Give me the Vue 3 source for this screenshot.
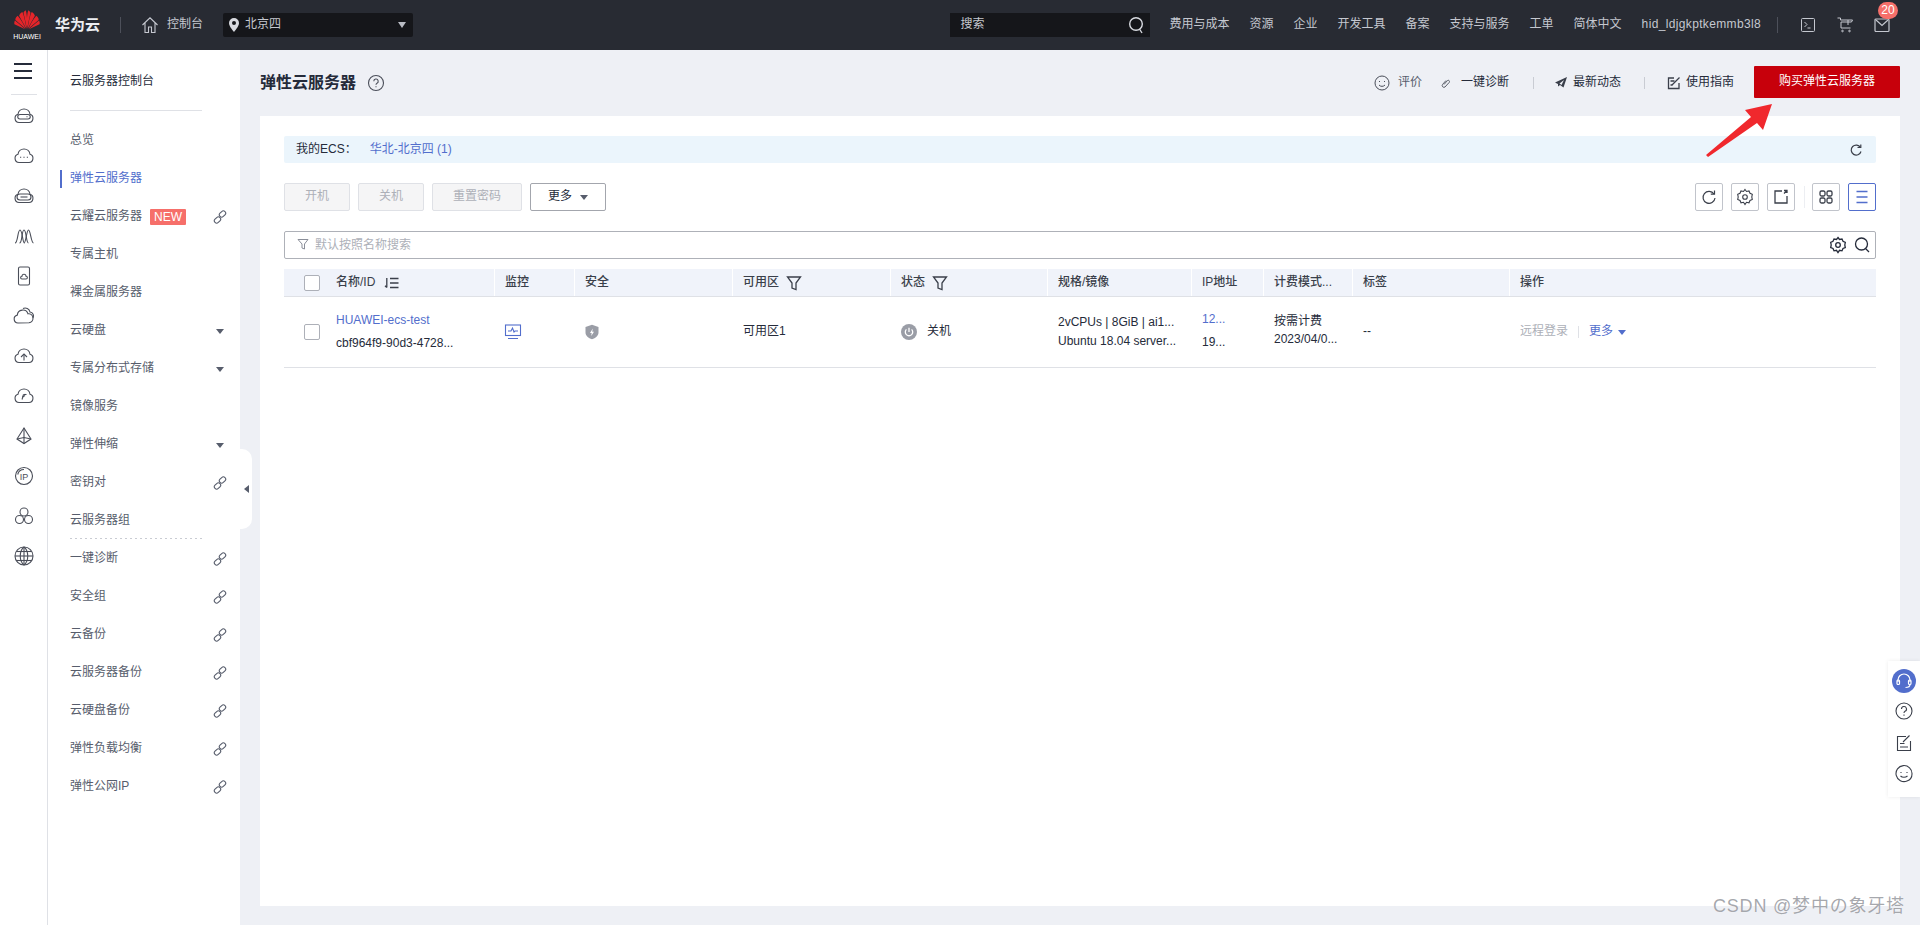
<script setup>
const cloud = 'M7 18.500a4.200 4.200 0 0 1-1-8.200A6 6 0 0 1 12 5a6 6 0 0 1 6 5.300 4.200 4.200 0 0 1-1 8.200Z'
const railIcons = [
  { paths: [cloud, 'M8 10.500h8a1.500 1.500 0 0 1 0 4.500H8a1.500 1.500 0 0 1 0-4.500Z', 'M14.500 12.700h1'] },
  { paths: [cloud, 'M8 13.200h1.200', 'M11.400 13.200h1.200', 'M14.800 13.200h1.200'] },
  { paths: [cloud, 'M8 10h8a2.500 2.500 0 0 1 0 6H8a2.500 2.500 0 0 1 0-6Z', 'M8.500 13h7'] },
  { paths: ['M3 19c3 0 2.500-13 5-13s2.500 13 4.500 13', 'M7.500 19c3 0 2-13 4.500-13s2 13 4.500 13', 'M12 19c2 0 2.500-13 4.500-13S19 19 21.500 19'] },
  { paths: ['M8 3h8a1.500 1.500 0 0 1 1.500 1.500v15A1.500 1.500 0 0 1 16 21H8a1.500 1.500 0 0 1-1.500-1.500v-15A1.500 1.500 0 0 1 8 3Z', 'M10 15a1.400 1.400 0 0 1 0-2.800 2 2 0 0 1 4 0 1.400 1.400 0 0 1 0 2.800Z'] },
  { paths: ['M6 19a4 4 0 0 1-.7-7.900A5.500 5.500 0 0 1 16 9.800a4.200 4.200 0 0 1 1 8.900Z', 'M11 4.500a5 5 0 0 1 7 3.500 4 4 0 0 1 3 6'] },
  { paths: [cloud, 'M12 16.500v-6', 'M9 13l3-3 3 3'] },
  { paths: [cloud, 'M10 15.500l1.500-5', 'M11.500 10.500h3', 'M10.500 13l2.500-1.500'] },
  { paths: ['M12 4 5 15l7 4.500 7-4.500Z', 'M12 4v15.500', 'M5 15l7-1.500 7 1.500'] },
  { paths: ['M12 3.500a8.500 8.500 0 1 1 0 17 8.500 8.500 0 0 1 0-17Z', 'M12 5.500a6.500 6.500 0 0 0-6.300 5'], label: 'IP' },
  { paths: ['M12 4a4 4 0 1 1 0 8 4 4 0 0 1 0-8Z', 'M7.500 11.500a4 4 0 1 1 0 8 4 4 0 0 1 0-8Z', 'M16.500 11.500a4 4 0 1 1 0 8 4 4 0 0 1 0-8Z'] },
  { paths: ['M12 3a9 9 0 1 1 0 18 9 9 0 0 1 0-18Z', 'M3 12h18', 'M4.500 7.500h15', 'M4.500 16.500h15', 'M12 3v18', 'M12 3c-5 4-5 14 0 18', 'M12 3c5 4 5 14 0 18'] },
]
const navItems = [
  { name: '总览' },
  { name: '弹性云服务器', active: true },
  { name: '云耀云服务器', badge: 'NEW', link: true },
  { name: '专属主机' },
  { name: '裸金属服务器' },
  { name: '云硬盘', arrow: true },
  { name: '专属分布式存储', arrow: true },
  { name: '镜像服务' },
  { name: '弹性伸缩', arrow: true },
  { name: '密钥对', link: true },
  { name: '云服务器组', dotted: true },
  { name: '一键诊断', link: true },
  { name: '安全组', link: true },
  { name: '云备份', link: true },
  { name: '云服务器备份', link: true },
  { name: '云硬盘备份', link: true },
  { name: '弹性负载均衡', link: true },
  { name: '弹性公网IP', link: true },
]
const topLinks = ['费用与成本', '资源', '企业', '开发工具', '备案', '支持与服务', '工单', '简体中文', 'hid_ldjgkptkemmb3l8']
const columns = [
  { label: '名称/ID', sort: true, first: true },
  { label: '监控' },
  { label: '安全' },
  { label: '可用区', filter: true },
  { label: '状态', filter: true },
  { label: '规格/镜像' },
  { label: 'IP地址' },
  { label: '计费模式...' },
  { label: '标签' },
  { label: '操作' },
]
</script>

<template>
  <div class="page">
    <header class="topbar">
      <div class="logo">
        <svg width="26" height="20" viewBox="0 0 28 21" class="petals">
          <g fill="#e5252a">
            <path d="M14 20 10.500 4C9.500 2 11.500 .8 12.500 0c1.500 3 2 12 1.500 20Z" />
            <path d="M14 20 17.500 4C18.500 2 16.500 .8 15.500 0c-1.500 3-2 12-1.500 20Z" />
            <path d="M13.300 20 5.500 6C6 4 8 2.500 9 2c2 4 3.500 12 4.300 18Z" />
            <path d="M14.700 20 22.500 6C22 4 20 2.500 19 2c-2 4-3.500 12-4.300 18Z" />
            <path d="M12.500 20 1.500 10.500C1 9 3 6.500 4 6c3.500 4 6.500 9.500 8.500 14Z" />
            <path d="M15.500 20 26.500 10.500C27 9 25 6.500 24 6c-3.500 4-6.500 9.500-8.500 14Z" />
            <path d="M12 20.500 .5 15C0 13.500 .5 12 1 11c4 3 8 6.500 11 9.500Z" />
            <path d="M16 20.500 27.500 15C28 13.500 27.500 12 27 11c-4 3-8 6.500-11 9.500Z" />
          </g>
        </svg>
        <span class="logo-text">HUAWEI</span>
      </div>
      <span class="brand">华为云</span>
      <span class="top-sep"></span>
      <svg class="home" width="18" height="18" viewBox="0 0 18 18" fill="none" stroke="#c5c8d0" stroke-width="1.100">
        <path d="M1.500 9 9 1.800 16.500 9M4 7v9.500h3.500V11h3v5.500H14V7" />
      </svg>
      <span class="console">控制台</span>
      <div class="region">
        <svg width="10" height="14" viewBox="0 0 10 14"><path fill="#d8dae0" fill-rule="evenodd" d="M5 0a5 5 0 0 1 5 5c0 3-3 6.500-5 9-2-2.500-5-6-5-9a5 5 0 0 1 5-5Zm0 3a2 2 0 1 0 0 4 2 2 0 0 0 0-4Z" /></svg>
        <span class="region-name">北京四</span>
        <span class="tri light"></span>
      </div>
      <div class="spacer"></div>
      <div class="search">
        <span>搜索</span>
        <svg width="16" height="18" viewBox="0 0 16 18" fill="none" stroke="#d8dae0" stroke-width="1.400"><circle cx="8" cy="8" r="6.300" /><path d="m11.500 13 2.500 4" /></svg>
      </div>
      <nav class="top-links">
        <span v-for="t in topLinks" :key="t">{{ t }}</span>
      </nav>
      <span class="top-sep right"></span>
      <div class="top-icons">
        <svg width="16" height="16" viewBox="0 0 16 16" fill="none" stroke="#c5c8d0"><rect x="1.500" y="1.500" width="13" height="13" rx="1" /><path d="m4.500 5 2.500 2.500-2.500 2.500M7.500 11h3" /></svg>
        <svg width="18" height="18" viewBox="0 0 18 18" fill="none" stroke="#c5c8d0"><path d="M1.500 2h3v2h12l-1 2H5v6h9.500" /><path d="M12 4v5" /><circle cx="6.500" cy="15" r=".8" /><circle cx="13.500" cy="15" r=".8" /></svg>
        <div class="mail">
          <svg width="16" height="16" viewBox="0 0 16 16" fill="none" stroke="#c5c8d0" stroke-width="1.200"><rect x="1" y="2" width="14" height="12.500" rx="1" /><path d="m2 3 6 5.500L14 3" /></svg>
          <span class="mail-badge">20</span>
        </div>
      </div>
    </header>

    <div class="body">
      <aside class="rail">
        <div class="burger"><i></i><i></i><i></i></div>
        <div class="rail-line"></div>
        <svg v-for="(ic, i) in railIcons" :key="i" class="rail-icon" width="24" height="24" viewBox="0 0 24 24" fill="none" stroke="#4a4e59" stroke-width="1.100">
          <path v-for="d in ic.paths" :key="d" :d="d" />
          <text v-if="ic.label" x="12" y="15.500" text-anchor="middle" class="ip-label">{{ ic.label }}</text>
        </svg>
      </aside>

      <aside class="sidebar">
        <div class="side-title">云服务器控制台</div>
        <div class="side-line"></div>
        <ul class="side-list">
          <li v-for="item in navItems" :key="item.name" class="side-item" :class="{ active: item.active, dotted: item.dotted }">
            <span>{{ item.name }}</span>
            <em v-if="item.badge" class="new">{{ item.badge }}</em>
            <svg v-if="item.link" class="side-end" width="14" height="14" viewBox="0 0 14 14" fill="none" stroke="#575d6c" stroke-width="1.100">
              <rect x="1" y="7.700" width="7" height="4.600" rx="2.300" transform="rotate(-45 4.500 10)" />
              <rect x="6" y="1.700" width="7" height="4.600" rx="2.300" transform="rotate(-45 9.500 4)" />
            </svg>
            <span v-if="item.arrow" class="tri side-end small"></span>
          </li>
        </ul>
        <div class="collapse"><span class="tri-left"></span></div>
      </aside>

      <main class="main">
        <div class="main-head">
          <h1>弹性云服务器</h1>
          <svg class="help" width="18" height="18" viewBox="0 0 18 18" fill="none" stroke="#4a4e59" stroke-width="1.100"><circle cx="9" cy="9" r="7.500" /><path d="M6.800 7.200A2.200 2.200 0 1 1 10 9.200c-.7.400-1 .8-1 1.600" /><path d="M9 12.300v1" /></svg>
          <div class="spacer"></div>
          <div class="actions">
            <svg class="a-smile" width="16" height="16" viewBox="0 0 16 16" fill="none" stroke="#4a4e59"><circle cx="8" cy="8" r="7" /><path d="M5.500 6v1M10.500 6v1M5 10c1.500 1.800 4.500 1.800 6 0" /></svg>
            <span class="a-gray">评价</span>
            <svg class="a-link" width="10" height="12" viewBox="0 0 10 12" fill="none" stroke="#4a4e59" stroke-width=".9"><path d="M4 7.500 7.500 3.500A1.300 1.300 0 0 1 9.300 5.300L5 10A1.800 1.800 0 0 1 2.500 7.500L6 3.500" /></svg>
            <span class="a-text wide">一键诊断</span>
            <span class="a-sep"></span>
            <svg class="a-news" width="14" height="14" viewBox="0 0 14 14" fill="#3a3f4a"><path d="M13 1 1 6.500l3 1.500v2.500l2-1.500 3.500 2.500ZM5.500 7.500 10 4l-2.500 5Z" /></svg>
            <span class="a-text">最新动态</span>
            <span class="a-sep two"></span>
            <svg class="a-news" width="14" height="14" viewBox="0 0 14 14" fill="none" stroke="#3a3f4a" stroke-width="1.300"><path d="M12 7v5.500H1.500V2H7" /><path d="M5 9 12.500 1.500" /><path d="M3.500 5h4M3.500 9h2" /></svg>
            <span class="a-text">使用指南</span>
          </div>
          <button class="buy">购买弹性云服务器</button>
        </div>

        <section class="card">
          <div class="info">
            <span class="info-label">我的ECS：</span>
            <span class="info-link">华北-北京四 (1)</span>
            <div class="spacer"></div>
            <svg width="14" height="14" viewBox="0 0 14 14" fill="none" stroke="#3a3f4a" stroke-width="1.200"><path d="M11.500 4.500A5 5 0 1 0 12 8.500" /><path d="M8.500 4.500h3.300V1.500" /></svg>
          </div>

          <div class="toolbar">
            <button class="btn disabled w1">开机</button>
            <button class="btn disabled w1">关机</button>
            <button class="btn disabled w2">重置密码</button>
            <button class="btn more">更多<span class="tri"></span></button>
            <div class="spacer"></div>
            <button class="tool">
              <svg width="16" height="16" viewBox="0 0 16 16" fill="none" stroke="#3a3f4a" stroke-width="1.200"><path d="M13 5A6 6 0 1 0 14 9" /><path d="M9.800 5.200h3.700V1.500" /></svg>
            </button>
            <button class="tool">
              <svg width="18" height="18" viewBox="0 0 18 18" fill="none" stroke="#3a3f4a" stroke-width="1.100"><path d="m9 1.500 1.500 2 2.500-.5 1 2.300 2.300 1-.5 2.700.5 2.500-2.300 1-1 2.300-2.500-.5L9 16.500l-1.500-2.200-2.500.5-1-2.300-2.300-1 .5-2.500-.5-2.700 2.300-1 1-2.300 2.500.5Z" /><circle cx="9" cy="9" r="2.300" /></svg>
            </button>
            <button class="tool">
              <svg width="16" height="16" viewBox="0 0 16 16" fill="none" stroke="#3a3f4a" stroke-width="1.300"><path d="M9 2H2v12h12V7" /><path d="M11 4.500 14 1.500M11 1.500h3V4" /></svg>
            </button>
            <span class="tool-sep"></span>
            <button class="tool">
              <svg width="16" height="16" viewBox="0 0 16 16" fill="none" stroke="#3a3f4a" stroke-width="1.300"><rect x="2" y="2" width="5" height="5" rx="1.500" /><rect x="9" y="2" width="5" height="5" rx="1.500" /><rect x="2" y="9" width="5" height="5" rx="1.500" /><rect x="9" y="9" width="5" height="5" rx="1.500" /></svg>
            </button>
            <button class="tool on">
              <svg width="16" height="16" viewBox="0 0 16 16" fill="none" stroke="#526ecc" stroke-width="1.300"><path d="M2.500 2.500h11M2.500 8h11M2.500 13.500h11" /></svg>
            </button>
          </div>

          <div class="filter">
            <svg class="f-funnel" width="12" height="12" viewBox="0 0 12 12" fill="none" stroke="#8a8e99"><path d="M1 1.500h10L7.500 6v5L5 10V6Z" /></svg>
            <span class="placeholder">默认按照名称搜索</span>
            <div class="spacer"></div>
            <svg width="18" height="18" viewBox="0 0 18 18" fill="none" stroke="#252b3a" stroke-width="1.300"><path d="m9 1.500 1.500 2 2.500-.5 1 2.300 2.300 1-.5 2.700.5 2.500-2.300 1-1 2.300-2.500-.5L9 16.500l-1.500-2.200-2.500.5-1-2.300-2.300-1 .5-2.500-.5-2.700 2.300-1 1-2.300 2.500.5Z" /><circle cx="9" cy="9" r="2.300" /></svg>
            <svg class="f-search" width="18" height="18" viewBox="0 0 18 18" fill="none" stroke="#252b3a" stroke-width="1.300"><circle cx="8.500" cy="8" r="6" /><path d="m12.500 12.500 3.500 3.500" /></svg>
          </div>

          <div class="table">
            <div class="row head">
              <div v-for="c in columns" :key="c.label" class="hcell" :class="{ first: c.first }">
                <span v-if="c.first" class="check"></span>
                <span>{{ c.label }}</span>
                <svg v-if="c.sort" class="sort" width="16" height="14" viewBox="0 0 16 14" fill="none" stroke="#3a3f4a" stroke-width="1.300"><path d="M2.800 2v9.500M1 9.800l1.800 1.700M6 2.500h8.500M6 7h8.500M6 11.500h8.500" /></svg>
                <svg v-if="c.filter" class="funnel" width="16" height="16" viewBox="0 0 16 16" fill="none" stroke="#3a3f4a" stroke-width="1.300"><path d="M1.500 2h13L10 8v6.500L6 13V8Z" /></svg>
              </div>
            </div>
            <div class="row data">
              <div class="cell first">
                <span class="check"></span>
                <div class="stack gap-name">
                  <span class="link">HUAWEI-ecs-test</span>
                  <span>cbf964f9-90d3-4728...</span>
                </div>
              </div>
              <div class="cell">
                <svg class="nudge" width="18" height="18" viewBox="0 0 18 18" fill="none" stroke="#526ecc" stroke-width="1.100"><rect x="1.500" y="2" width="15" height="10.500" /><path d="M4 8h3l1.500-3 1.500 4 1-1h3M4 15.500h10" /></svg>
              </div>
              <div class="cell">
                <svg class="nudge" width="16" height="16" viewBox="0 0 16 16"><path fill="#9a9da6" fill-rule="evenodd" d="M8 .8 14.500 3v5.500c0 3.300-3 5.600-6.500 6.700-3.500-1.100-6.500-3.400-6.500-6.700V3Zm.8 3.700L6 9h1.700l-.5 3L10 7.800H8.200Z" /></svg>
              </div>
              <div class="cell">可用区1</div>
              <div class="cell">
                <span class="power">
                  <svg width="16" height="16" viewBox="0 0 16 16"><circle cx="8" cy="8" r="8" fill="#9a9da6" /><path d="M5.400 5.400a3.700 3.700 0 1 0 5.200 0M8 3.800V8" fill="none" stroke="#fff" stroke-width="1.300" /></svg>
                </span>
                <span>关机</span>
              </div>
              <div class="cell">
                <div class="stack gap-spec">
                  <span>2vCPUs | 8GiB | ai1...</span>
                  <span>Ubuntu 18.04 server...</span>
                </div>
              </div>
              <div class="cell">
                <div class="stack gap-ip">
                  <span class="link">12...</span>
                  <span>19...</span>
                </div>
              </div>
              <div class="cell">
                <div class="stack gap-bill">
                  <span>按需计费</span>
                  <span>2023/04/0...</span>
                </div>
              </div>
              <div class="cell">--</div>
              <div class="cell">
                <span class="muted">远程登录</span>
                <span class="op-sep"></span>
                <span class="link">更多</span>
                <span class="tri blue"></span>
              </div>
            </div>
          </div>
        </section>
      </main>
    </div>

    <div class="float">
      <span class="float-blue">
        <svg width="18" height="18" viewBox="0 0 18 18" fill="none" stroke="#fff" stroke-width="1.200"><path d="M3 10V8a6 6 0 0 1 12 0v2" /><rect x="2" y="8" width="2.500" height="4.500" rx="1" /><rect x="13.500" y="8" width="2.500" height="4.500" rx="1" /><path d="M15 12.500c0 2-2 3-4.500 3" /></svg>
      </span>
      <svg class="f1" width="18" height="18" viewBox="0 0 18 18" fill="none" stroke="#3a3f4a" stroke-width="1.100"><circle cx="9" cy="9" r="8" /><path d="M6.500 7A2.500 2.500 0 1 1 10 9.300c-.7.400-1 .8-1 1.700" /><path d="M9 12.500v1.200" /></svg>
      <svg class="f2" width="18" height="18" viewBox="0 0 18 18" fill="none" stroke="#3a3f4a" stroke-width="1.100"><path d="M11 2.500H2.500v14h13V7M5 9.500h4.500M5 13h8M8 8l6.500-6.500" /></svg>
      <svg class="f3" width="18" height="18" viewBox="0 0 18 18" fill="none" stroke="#3a3f4a" stroke-width="1.100"><path d="M12 16a8 8 0 1 1 5-7c0 3-2 6-5 7Z" /><path d="M6 7v1M12 7v1M5.500 11c1.800 1.500 5 1.500 7 0" /></svg>
    </div>

    <svg class="arrow" width="70" height="54" viewBox="0 0 70 54"><path fill="#f0282d" d="M1 52 46 14 40 7 67 1 58 27 52 20 3 54Z" transform="translate(0 -1)" /></svg>
    <div class="watermark">CSDN @梦中の象牙塔</div>
  </div>
</template>

<style>
html, body { margin: 0; padding: 0; overflow: hidden; }
</style>

<style scoped>
.page {
  position: relative;
  height: 925px;
  overflow: hidden;
  display: flex;
  flex-direction: column;
  background: #eef0f5;
  color: #252b3a;
  font: 12px/1.3 "Liberation Sans", "Noto Sans CJK SC", sans-serif;
}
.spacer { flex: 1; }
svg { flex: none; display: block; }
button { font: inherit; padding: 0; cursor: pointer; }

.tri {
  display: inline-block;
  width: 0;
  height: 0;
  border-left: 5px solid transparent;
  border-right: 5px solid transparent;
  border-top: 6px solid #575d6c;
}
.tri.light { border-top-color: #b9bcc4; border-left-width: 4px; border-right-width: 4px; }

/* top bar */
.topbar {
  height: 50px;
  flex: none;
  display: flex;
  align-items: center;
  background: #282b33;
  color: #c5c8d0;
}
.logo {
  width: 26px;
  margin-left: 14px;
  display: flex;
  flex-direction: column;
  align-items: center;
}
.petals { margin-top: 1px; }
.logo-text { font-size: 7px; line-height: 8px; color: #fff; margin-top: 3px; }
.brand { margin-left: 15px; font-size: 15px; font-weight: 700; color: #eceef2; }
.top-sep { width: 1px; height: 16px; background: #4d505a; margin-left: 20px; }
.home { margin-left: 20px; }
.console { margin-left: 8px; }
.region {
  margin-left: 20px;
  width: 190px;
  height: 24px;
  box-sizing: border-box;
  padding: 0 7px 0 6px;
  display: flex;
  align-items: center;
  background: #15161a;
  border-radius: 2px;
}
.region-name { margin-left: 6px; flex: 1; font-size: 12px; }
.search {
  width: 200px;
  height: 24px;
  box-sizing: border-box;
  padding: 0 6px 0 10px;
  display: flex;
  align-items: center;
  justify-content: space-between;
  background: #15161a;
}
.top-links { display: flex; gap: 20px; margin-left: 19px; white-space: nowrap; }
.top-links span:last-child { letter-spacing: .35px; }
.top-sep.right { margin-left: 16px; }
.top-icons { display: flex; align-items: center; margin-left: 22px; margin-right: 30px; gap: 20px; }
.mail { position: relative; }
.mail-badge {
  position: absolute;
  left: 4px;
  top: -15px;
  min-width: 20px;
  height: 17px;
  line-height: 17px;
  text-align: center;
  border-radius: 9px;
  background: #f66f6a;
  color: #fff;
  font-size: 12px;
}

/* shell */
.body { flex: 1; display: flex; min-height: 0; }
.rail {
  width: 47px;
  flex: none;
  background: #fff;
  border-right: 1px solid #dfe1e6;
  display: flex;
  flex-direction: column;
  align-items: center;
}
.burger { margin-top: 13px; width: 18px; display: flex; flex-direction: column; gap: 5px; padding-right: 1px; }
.burger i { display: block; height: 2px; background: #252b3a; }
.rail-line { width: 26px; height: 1px; background: #dfe1e6; margin: 15px 0 9px 1px; }
.rail-icon { margin-bottom: 16px; }
.ip-label { font: 9px "Liberation Sans", sans-serif; fill: #4a4e59; stroke: none; }

.sidebar {
  position: relative;
  width: 192px;
  flex: none;
  box-sizing: border-box;
  background: #fff;
}
.side-title { margin: 23px 0 0 22px; line-height: 16px; color: #252b3a; }
.side-line { width: 132px; height: 1px; background: #dfe1e6; margin: 21px 0 11px 22px; }
.side-list { list-style: none; margin: 0; padding: 0; }
.side-item {
  position: relative;
  height: 38px;
  display: flex;
  align-items: center;
  padding: 0 13px 0 22px;
  color: #575d6c;
}
.side-item.active { color: #526ecc; }
.side-item.active::before {
  content: "";
  position: absolute;
  left: 12px;
  top: 10px;
  width: 2px;
  height: 18px;
  background: #526ecc;
}
.side-item.dotted::after {
  content: "";
  position: absolute;
  left: 22px;
  right: 38px;
  bottom: 1px;
  height: 1px;
  background: repeating-linear-gradient(90deg, #c9ccd3 0 2px, transparent 2px 5px);
}
.new {
  margin-left: 8px;
  padding: 0 4px;
  height: 16px;
  line-height: 16px;
  background: #f66f6a;
  color: #fff;
  font-style: normal;
  font-size: 12px;
  border-radius: 1px;
}
.side-end { margin-left: auto; }
.tri.small { border-left-width: 4px; border-right-width: 4px; border-top-width: 5px; margin-right: 3px; }
.collapse {
  position: absolute;
  left: 192px;
  top: 399px;
  width: 12px;
  height: 80px;
  background: #fff;
  border-radius: 0 10px 10px 0;
  display: flex;
  align-items: center;
  justify-content: center;
}
.tri-left {
  width: 0;
  height: 0;
  border-top: 4px solid transparent;
  border-bottom: 4px solid transparent;
  border-right: 5px solid #575d6c;
}

/* main */
.main { flex: 1; min-width: 0; padding: 0 20px; display: flex; flex-direction: column; }
.main-head { height: 66px; display: flex; align-items: center; flex: none; }
.main-head h1 { margin: 0; font-size: 16px; line-height: 32px; font-weight: 700; color: #252b3a; }
.help { margin-left: 11px; }
.actions { display: flex; align-items: center; color: #252b3a; }
.a-gray { margin-left: 8px; color: #575d6c; }
.a-link { margin-left: 18px; }
.a-text { margin-left: 5px; }
.a-text.wide { margin-left: 11px; }
.a-sep { width: 1px; height: 12px; background: #c9ccd3; margin: 0 17px 0 24px; }
.a-sep.two { margin: 0 19px 0 23px; }
.a-news { margin-left: 3px; }
.buy {
  width: 146px;
  height: 32px;
  margin: 0 0 2px 20px;
  border: 0;
  border-radius: 1px;
  background: #c7000b;
  color: #fff;
}

.card {
  height: 790px;
  box-sizing: border-box;
  padding: 20px 24px 0;
  background: #fff;
}
.info {
  height: 27px;
  box-sizing: border-box;
  display: flex;
  align-items: center;
  padding: 1px 13px 0 12px;
  background: #ebf5fc;
  border-radius: 2px;
}
.info-label { color: #252b3a; }
.info-link { margin-left: 13px; color: #526ecc; }

.toolbar { display: flex; align-items: center; margin-top: 20px; height: 28px; }
.btn {
  height: 28px;
  box-sizing: border-box;
  border: 1px solid #dfe1e6;
  border-radius: 2px;
  background: #fff;
  margin-right: 8px;
}
.btn.disabled { background: #f5f5f6; color: #adb0b8; }
.w1 { width: 66px; }
.w2 { width: 90px; }
.more {
  width: 76px;
  border-color: #a3a6ad;
  color: #252b3a;
  margin-right: 0;
  display: flex;
  align-items: center;
  justify-content: center;
  gap: 8px;
}
.more .tri { border-left-width: 4px; border-right-width: 4px; border-top-width: 5px; }
.tool {
  width: 28px;
  height: 28px;
  box-sizing: border-box;
  border: 1px solid #c1c4cb;
  border-radius: 2px;
  background: #fff;
  margin-left: 8px;
  display: flex;
  align-items: center;
  justify-content: center;
}
.tool.on { border-color: #526ecc; }
.tool-sep { width: 1px; height: 22px; background: #eceef2; margin: 0 -1px 0 9px; }

.filter {
  height: 28px;
  box-sizing: border-box;
  margin-top: 20px;
  display: flex;
  align-items: center;
  padding: 0 4px 0 12px;
  border: 1px solid #aeb1b8;
  border-radius: 2px;
}
.f-funnel { margin-top: -2px; }
.placeholder { margin-left: 6px; margin-top: 1px; color: #adb0b8; }
.f-search { margin-left: 6px; }

.table { margin-top: 10px; }
.row {
  display: grid;
  grid-template-columns: 210px 80px 158px 158px 157px 144px 72px 89px 157px 1fr;
}
.head {
  height: 28px;
  box-sizing: border-box;
  background: #f0f3fa;
  border-bottom: 1px solid #dfe1e6;
  font-weight: 500;
  color: #3a3f4a;
}
.hcell {
  display: flex;
  align-items: center;
  padding-left: 10px;
  border-left: 1px solid #fff;
}
.hcell.first { border-left: 0; }
.first { padding-left: 20px; display: flex; align-items: center; }
.check {
  width: 16px;
  height: 16px;
  box-sizing: border-box;
  flex: none;
  border: 1px solid #adb0b8;
  border-radius: 2px;
  background: #fff;
  margin-right: 16px;
}
.sort { margin-left: 9px; }
.funnel { margin-left: 7px; }
.data { height: 71px; border-bottom: 1px solid #dfe1e6; box-sizing: border-box; }
.cell { display: flex; align-items: center; padding-left: 11px; color: #252b3a; }
.cell.first { padding-left: 20px; }
.stack { display: flex; flex-direction: column; }
.gap-name { gap: 7px; }
.gap-spec { gap: 3px; margin-top: 1px; }
.gap-ip { gap: 7px; margin-top: -2px; }
.gap-bill { gap: 2px; margin-top: -2px; }
.link { color: #526ecc; }
.power { margin-right: 10px; }
.nudge { margin-left: -1px; }
.muted { color: #adb0b8; }
.op-sep { width: 1px; height: 12px; background: #dfe1e6; margin: 0 10px; }
.tri.blue { border-top-color: #526ecc; border-left-width: 4px; border-right-width: 4px; border-top-width: 5px; margin-left: 5px; }

/* overlays */
.float {
  position: absolute;
  left: 1888px;
  top: 661px;
  width: 32px;
  height: 136px;
  background: #fff;
  box-shadow: 0 0 4px rgba(0, 0, 0, .08);
}
.float-blue {
  position: absolute;
  left: 4px;
  top: 8px;
  width: 24px;
  height: 24px;
  border-radius: 50%;
  background: #526ecc;
  display: flex;
  align-items: center;
  justify-content: center;
}
.f1, .f2, .f3 { position: absolute; left: 7px; }
.f1 { top: 41px; }
.f2 { top: 73px; }
.f3 { top: 104px; }
.arrow { position: absolute; left: 1705px; top: 104px; }
.watermark {
  position: absolute;
  left: 1713px;
  top: 896px;
  font-size: 18px;
  line-height: 21px;
  letter-spacing: .8px;
  white-space: nowrap;
  color: rgba(150, 152, 158, .85);
  text-shadow: 0 0 1px rgba(255, 255, 255, .9);
}
</style>
